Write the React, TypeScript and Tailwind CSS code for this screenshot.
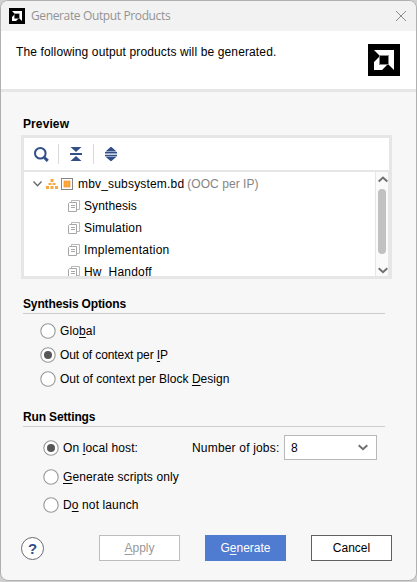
import { useState, type ReactNode } from "react";

function AmdMark({ size }: { size: number }) {
  return (
    <svg width={size} height={size} viewBox="0 0 32 32" className="shrink-0">
      <rect width="32" height="32" fill="#000" />
      <path d="M6 6H26V26L20 20V12H12Z" fill="#fff" />
      <path d="M11 13V21H19L14 26H6V18Z" fill="#fff" />
      <rect x="11.5" y="11.5" width="9" height="9" fill="#000" stroke="#888" strokeWidth="1" />
    </svg>
  );
}

function FilesIcon() {
  return (
    <svg width="12" height="12" viewBox="0 0 12 12" fill="none" stroke="#a6a6a6" className="shrink-0">
      <path d="M3.5 2V.5H11.5V9.5H9" stroke="#b8b8b8" />
      <path d="M1.5 2.5H8.5V11.5H.5V3.5Z" fill="#fff" />
      <path d="M3 5.5H7M3 7.5H7" />
    </svg>
  );
}

function Chevron({ up = false }: { up?: boolean }) {
  return (
    <svg width="10" height="7" viewBox="0 0 10 7" fill="none" stroke="#707070" strokeWidth="2" className="shrink-0">
      <path d={up ? "M.7 5.5L5 1.5L9.3 5.5" : "M.7 1.2L5 5.2L9.3 1.2"} />
    </svg>
  );
}

function Section({ children }: { children: ReactNode }) {
  return (
    <h2 className="mr-[31px] ml-[22px] h-[18px] border-b border-[#cccccc] pt-px text-[12px] leading-[15px] font-bold tracking-[-0.14px]">
      {children}
    </h2>
  );
}

function Radio({
  checked,
  onSelect,
  tracking = "tracking-[0.12px]",
  children,
}: {
  checked: boolean;
  onSelect: () => void;
  tracking?: string;
  children: ReactNode;
}) {
  return (
    <button onClick={onSelect} className="flex h-4 items-center gap-1 whitespace-nowrap">
      <svg width="16" height="16" viewBox="0 0 16 16" className="shrink-0">
        <circle cx="8" cy="8" r="7.2" fill="#fff" stroke="#999" strokeWidth="1.1" />
        {checked && <circle cx="8" cy="8" r="4" fill="#575757" />}
      </svg>
      <span className={tracking}>{children}</span>
    </button>
  );
}

function U({ children }: { children: ReactNode }) {
  return <span className="underline decoration-1 underline-offset-2">{children}</span>;
}

const products = [
  { name: "Synthesis", tracking: "tracking-[0.1px]" },
  { name: "Simulation", tracking: "tracking-[0.2px]" },
  { name: "Implementation", tracking: "tracking-[0.25px]" },
  { name: "Hw_Handoff", tracking: "tracking-[0.2px]" },
];

export default function App() {
  const [mode, setMode] = useState("ip");
  const [run, setRun] = useState("local");
  return (
    <div className="h-[582px] w-[417px] overflow-hidden bg-[#d0d0d0] font-['Liberation_Sans',Arial,sans-serif] text-[12px] leading-[16px] text-black">
      <div className="flex h-[581px] w-[417px] flex-col overflow-hidden rounded-[8px] border border-[#b0b0b0] bg-[#f7f7f7]">
        <header className="flex h-[30px] shrink-0 items-center bg-[#f2f2f2] pr-[9px] pl-2">
          <AmdMark size={16} />
          <span className="ml-[6px] font-['Open_Sans',sans-serif] text-[12px] tracking-[-0.37px] whitespace-nowrap text-[#929292]">
            Generate Output Products
          </span>
          <svg width="12" height="12" viewBox="0 0 12 12" className="mb-px ml-auto" stroke="#8c8c8c" fill="none">
            <path d="M1 1L11 11M11 1L1 11" />
          </svg>
        </header>
        <div className="flex h-[61px] shrink-0 items-start justify-between border-b-[3px] border-[#e6e6e6] bg-white pt-[13px] pr-4 pl-[15px]">
          <p className="tracking-[0.13px] whitespace-nowrap">The following output products will be generated.</p>
          <AmdMark size={32} />
        </div>

        <h2 className="mt-[24px] ml-[22px] h-[19px] shrink-0 leading-[16px] font-bold tracking-[0.1px]">Preview</h2>
        <section className="ml-5 flex h-[144px] w-[371px] shrink-0 flex-col border-[3px] border-[#e6e6e6] bg-white">
          <div className="flex h-[34px] shrink-0 items-center border-b-2 border-[#e6e6e6]">
            <svg width="15" height="15" viewBox="0 0 15 15" className="ml-[10px]" fill="none" stroke="#324f87">
              <circle cx="6.3" cy="6.3" r="5.3" strokeWidth="2" />
              <path d="M10.3 10.5L13.8 13.8" strokeWidth="3" />
            </svg>
            <span className="ml-[9px] h-5 w-px bg-[#d9d9d9]" />
            <svg width="12" height="14" viewBox="0 0 12 14" className="ml-[11px]" fill="#324f87">
              <path d="M.5 0H11.5L6 5ZM0 6H12V8H0ZM.5 14H11.5L6 9Z" />
            </svg>
            <span className="ml-[11px] h-5 w-px bg-[#d9d9d9]" />
            <svg width="12" height="14" viewBox="0 0 12 14" className="ml-[11px]" fill="#324f87">
              <path d="M.5 4.5L5.5 0H6.5L11.5 4.5ZM0 5H12V6.5H0ZM0 7.7H12V9.2H0ZM.5 9.7H11.5L6.5 14H5.5Z" />
            </svg>
          </div>
          <div className="flex min-h-0 flex-1">
            <div className="flex-1 overflow-hidden pt-px">
              <div className="flex h-[22px] items-center pl-[9px] whitespace-nowrap">
                <svg width="9" height="6" viewBox="0 0 9 6" fill="none" stroke="#666" strokeWidth="1.3">
                  <path d="M.5 .5L4.5 4.7L8.5 .5" />
                </svg>
                <svg width="12" height="10" viewBox="0 0 12 10" className="ml-1" fill="#f9a83f">
                  <path d="M4.5 0H7.5V3H4.5ZM2.5 4H5.5V6H2.5ZM6.5 4H9.5V6H6.5ZM0 7H3V10H0ZM4.5 7H7.5V10H4.5ZM9 7H12V10H9Z" />
                </svg>
                <svg width="12" height="12" viewBox="0 0 12 12" className="ml-[3px]">
                  <rect x=".5" y=".5" width="11" height="11" fill="#fff" stroke="#858585" />
                  <rect x="3" y="3" width="6" height="6" fill="#ffa837" stroke="#ee9135" strokeWidth=".7" />
                </svg>
                <span className="ml-[5px] tracking-[0.18px]">mbv_subsystem.bd</span>
                <span className="ml-[3px] tracking-[0.05px] text-[#858585]">(OOC per IP)</span>
              </div>
              {products.map(({ name, tracking }) => (
                <div key={name} className="flex h-[22px] items-center gap-1 pl-[44px]">
                  <FilesIcon />
                  <span className={tracking}>{name}</span>
                </div>
              ))}
            </div>
            <div className="flex w-[14px] shrink-0 flex-col items-center border-r border-l border-[#e6e6e6] bg-[#fafafa] pt-[4px] pb-[2px]">
              <div className="-mr-px flex"><Chevron up /></div>
              <div className="mt-[6px] mb-[13px] w-2 flex-1 rounded-full bg-[#c1c1c1]" />
              <div className="-mr-px flex"><Chevron /></div>
            </div>
          </div>
        </section>

        <div className="mt-[17px]">
          <Section>Synthesis Options</Section>
          <div className="flex flex-col gap-2 pt-[9px] pl-[39px]">
            <Radio checked={mode === "global"} onSelect={() => setMode("global")}>Glo<U>b</U>al</Radio>
            <Radio checked={mode === "ip"} onSelect={() => setMode("ip")} tracking="tracking-[-0.1px]">Out of context per <U>I</U>P</Radio>
            <Radio checked={mode === "block"} onSelect={() => setMode("block")} tracking="tracking-[0.02px]">Out of context per Block <U>D</U>esign</Radio>
          </div>
        </div>

        <div className="mt-[22px]">
          <Section>Run Settings</Section>
          <div className="flex flex-col pt-[8px] pl-[42px]">
            <div className="flex h-[25px] items-center">
              <div className="w-[149px]">
                <Radio checked={run === "local"} onSelect={() => setRun("local")}>On <U>l</U>ocal host:</Radio>
              </div>
              <span className="w-[92px] tracking-[0.18px] whitespace-nowrap">Number of jobs:</span>
              <button className="flex h-[25px] w-[93px] items-center justify-between border border-[#b8b8b8] bg-white pr-2 pl-[6px]">
                <span>8</span>
                <Chevron />
              </button>
            </div>
            <div className="mt-[9px]">
              <Radio checked={run === "scripts"} onSelect={() => setRun("scripts")}><U>G</U>enerate scripts only</Radio>
            </div>
            <div className="mt-3">
              <Radio checked={run === "none"} onSelect={() => setRun("none")}>D<U>o</U> not launch</Radio>
            </div>
          </div>
        </div>

        <footer className="mt-[22px] flex h-[26px] items-center pl-5">
          <button className="flex size-[23px] items-center justify-center rounded-full border border-[#6b6b6b] bg-white text-[15px] leading-none font-bold text-[#324f87]">
            ?
          </button>
          <button className="ml-[55px] h-[26px] w-[81px] border border-[#bdbdbd] bg-white text-[#999]"><U>A</U>pply</button>
          <button className="ml-[25px] h-[26px] w-[81px] bg-[#4f7bd0] text-white">G<U>e</U>nerate</button>
          <button className="ml-[25px] h-[26px] w-[81px] border border-[#606060] bg-white">Cancel</button>
        </footer>
      </div>
    </div>
  );
}
